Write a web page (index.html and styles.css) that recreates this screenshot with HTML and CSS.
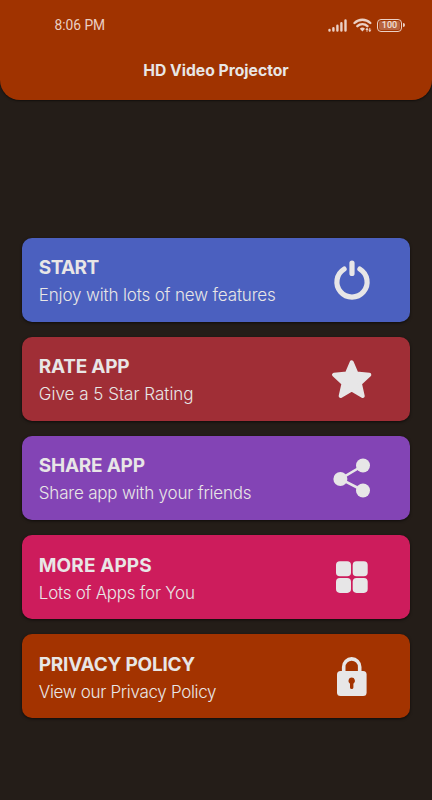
FILE: index.html
```
<!DOCTYPE html>
<html lang="en">
<head>
  <meta charset="UTF-8">
  <meta name="viewport" content="width=device-width, initial-scale=1.0">
  <title>HD Video Projector</title>
  <link rel="stylesheet" href="styles.css">
</head>
<body>
  <header class="app-header">
    <div class="status-bar">
      <span class="time">8:06 PM</span>
      <div class="status-icons">
        <svg class="signal" viewBox="0 0 20 13" width="20" height="13">
          <path d="M1.5 10.9V11.5M5.4 9.2V11.5M9.4 6.8V11.5M13.4 4.3V11.5M17.5 1.5V11.5" />
        </svg>
        <svg class="wifi" viewBox="0 0 20 15" width="20" height="15">
          <path d="M1.5 5a11.3 11.3 0 0 1 15.8 0M4.4 8.2a7 7 0 0 1 10 0" />
          <path d="M6.8 10.8a3.6 3.6 0 0 1 5.2 0L9.4 13.6z" class="fill" />
          <path d="M14 13.4v-3M16.8 10.4v3" class="thin" />
          <path d="M12.3 12l1.7-2 1.7 2zM15.1 11.8l1.7 2 1.7-2z" class="solid" />
        </svg>
        <div class="battery"><span>100</span></div>
      </div>
    </div>
    <h1>HD Video Projector</h1>
  </header>

  <main class="menu">
    <a class="card start">
      <div class="text">
        <h2>START</h2>
        <p>Enjoy with lots of new features</p>
      </div>
      <svg class="icon" viewBox="0 0 40 40">
        <path class="line" d="M12.1 9.1a15.1 15.1 0 1 0 15.8 0M20 3.1v10.3" />
      </svg>
    </a>
    <a class="card rate">
      <div class="text">
        <h2>RATE APP</h2>
        <p>Give a 5 Star Rating</p>
      </div>
      <svg class="icon" viewBox="0 0 40 40">
        <path class="star" d="M19.7 3.3L24.5 14.5L37.3 15.8L27.9 24.5L30.7 37L19.7 30.6L8.7 37L11.5 24.5L2.1 15.8L14.9 14.5z" />
      </svg>
    </a>
    <a class="card share">
      <div class="text">
        <h2>SHARE APP</h2>
        <p>Share app with your friends</p>
      </div>
      <svg class="icon" viewBox="0 0 40 40">
        <path class="link" d="M31 7.5L8.4 21L31 32.5" />
        <circle cx="8.4" cy="21" r="7" />
        <circle cx="31" cy="7.5" r="7" />
        <circle cx="31" cy="32.5" r="7" />
      </svg>
    </a>
    <a class="card more">
      <div class="text">
        <h2>MORE APPS</h2>
        <p>Lots of Apps for You</p>
      </div>
      <svg class="icon" viewBox="0 0 40 40">
        <rect x="4" y="4.2" width="15" height="15" rx="3.8" />
        <rect x="20.7" y="4.2" width="15" height="15" rx="3.8" />
        <rect x="4" y="20.9" width="15" height="15" rx="3.8" />
        <rect x="20.7" y="20.9" width="15" height="15" rx="3.8" />
      </svg>
    </a>
    <a class="card privacy">
      <div class="text">
        <h2>PRIVACY POLICY</h2>
        <p>View our Privacy Policy</p>
      </div>
      <svg class="icon" viewBox="0 0 40 40">
        <path class="shackle" d="M11.7 17V10.9a8 8 0 0 1 16 0V17" />
        <rect x="5" y="15" width="29.6" height="25" rx="3.5" />
        <path class="keyhole" d="M19.7 21.6a3.3 3.3 0 0 0-1.7 6.1V31.4a1.7 1.7 0 0 0 3.4 0V27.7A3.3 3.3 0 0 0 19.7 21.6z" />
      </svg>
    </a>
  </main>
</body>
</html>
```
FILE: styles.css
```
body {
  margin: 0;
  height: 800px;
  background-color: #241d18;
  color: #e8e6e6;
  font-family: Inter, 'Liberation Sans', sans-serif;
  overflow: hidden;
}

.app-header {
  box-sizing: border-box;
  height: 99.5px;
  padding-top: 15px;
  background-color: #a03300;
  border-radius: 0 0 20px 20px;
  box-shadow: 0 1px 2px rgba(0, 0, 0, 0.5);
}

.status-bar {
  display: flex;
  justify-content: space-between;
  align-items: center;
  height: 20px;
  padding: 0 30px 0 54.4px;
}

.time {
  font-family: Roboto, sans-serif;
  font-size: 13.8px;
  color: #ebd0c5;
}

.status-icons {
  display: flex;
  align-items: center;
  gap: 4.5px;
}

.signal,
.wifi {
  fill: none;
  stroke: #ebd0c5;
  stroke-width: 2.4;
  stroke-linecap: round;
}

.wifi .fill,
.wifi .solid {
  fill: #ebd0c5;
  stroke: none;
}

.wifi .thin {
  stroke-width: 1;
}

.battery {
  position: relative;
  box-sizing: border-box;
  width: 25px;
  height: 13px;
  border: 1.5px solid #ebd0c5;
  border-radius: 4px;
  background-color: #b8633f;
  background-clip: content-box;
  padding: 1px;
  display: flex;
  justify-content: center;
  align-items: center;
  font: 500 9px Roboto, sans-serif;
  color: #f3e2da;
}

.battery::after {
  content: "";
  position: absolute;
  right: -3.5px;
  top: 3px;
  width: 2px;
  height: 4px;
  border-radius: 0 2px 2px 0;
  background-color: #ebd0c5;
}

h1 {
  margin: 26px 0 0;
  font-size: 15.7px;
  line-height: 20px;
  font-weight: 700;
  text-align: center;
}

.menu {
  display: flex;
  flex-direction: column;
  gap: 15px;
  padding: 138px 22.3px 0;
}

.card {
  box-sizing: border-box;
  display: flex;
  justify-content: space-between;
  align-items: center;
  height: 84.2px;
  padding: 0 38px 0 16.5px;
  border-radius: 10px;
  box-shadow: 0 1px 3px rgba(0, 0, 0, 0.6);
}

.text {
  padding-top: 4px;
}

.start {
  background-color: #4b60bf;
}

.rate {
  background-color: #a02e36;
}

.share {
  background-color: #8344b5;
}

.more {
  background-color: #cd1c5c;
}

.privacy {
  background-color: #a33300;
}

h2 {
  margin: 0;
  font-size: 19px;
  line-height: 28px;
  font-weight: 700;
  letter-spacing: -0.25px;
}

.start h2 {
  letter-spacing: -0.6px;
}

.more h2 {
  letter-spacing: 0.1px;
}

p {
  margin: 0;
  font-size: 17px;
  line-height: 27px;
  font-weight: 300;
  letter-spacing: -0.15px;
}

.rate p {
  letter-spacing: 0;
}

.share p {
  letter-spacing: -0.2px;
}

.more p {
  letter-spacing: -0.25px;
}

.privacy p {
  letter-spacing: -0.32px;
}

.icon {
  width: 40px;
  height: 40px;
  fill: #e7e6e7;
}

.line {
  fill: none;
  stroke: #e7e6e7;
  stroke-width: 5.2;
  stroke-linecap: round;
}

.star {
  stroke: #e7e6e7;
  stroke-width: 4;
  stroke-linejoin: round;
}

.link {
  fill: none;
  stroke: #e7e6e7;
  stroke-width: 2.6;
}

.shackle {
  fill: none;
  stroke: #e7e6e7;
  stroke-width: 3.6;
}

.keyhole {
  fill: #a33300;
}
```
